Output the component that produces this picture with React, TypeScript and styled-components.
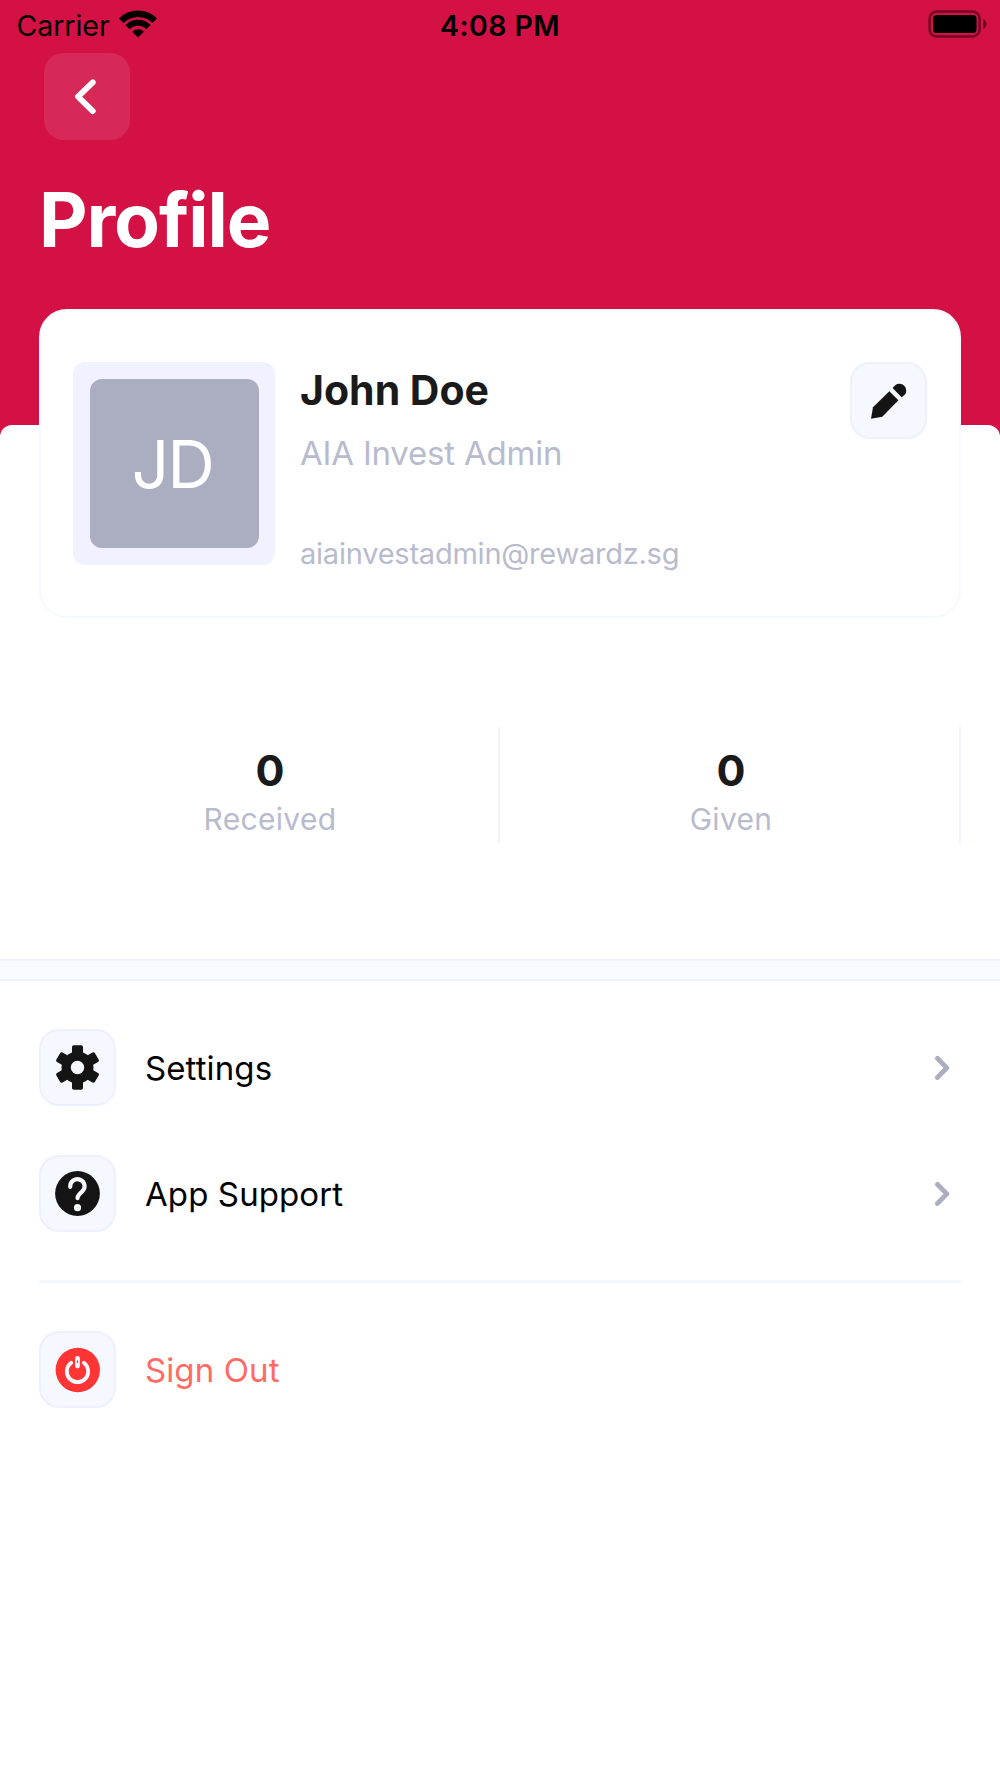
import React from 'react';
import styled, { createGlobalStyle } from 'styled-components';

const color = {
  brand: '#d31145',
  ink: '#1a1a1a',
  muted: '#b8bbcd',
  avatar: '#abadc1',
  line: '#f0f2ff',
  tile: '#f5f8ff',
  tileBorder: '#edf0ff',
  danger: '#ff6b64',
};

const GlobalStyle = createGlobalStyle`
  *, *::before, *::after { box-sizing: border-box; }
  body {
    margin: 0;
    background: #fff;
    font-family: Inter, 'Liberation Sans', sans-serif;
  }
  svg { display: block; }
`;

const Screen = styled.div`
  width: 1000px;
  height: 1778px;
  overflow: hidden;
  background: #fff;
`;

const Header = styled.header`
  height: 440px;
  background: ${color.brand};
`;

const StatusBar = styled.div`
  display: grid;
  grid-template-columns: 1fr auto 1fr;
  align-items: center;
  height: 51px;
  padding: 0 13px;
  font-size: 28.5px;
  color: #000;
`;

const Carrier = styled.div`
  display: flex;
  align-items: center;
  gap: 9.5px;
  padding-left: 3.5px;
  letter-spacing: -0.05px;
`;

const WifiSvg = styled.svg`
  margin-top: -4px;
`;

const Time = styled.div`
  font-weight: 600;
  letter-spacing: 0.4px;
`;

const BatterySvg = styled.svg`
  justify-self: end;
  margin-top: -3px;
`;

const BackButton = styled.button`
  display: block;
  width: 86.5px;
  height: 87px;
  margin: 2px 0 0 43.5px;
  padding: 0;
  border: 0;
  border-radius: 20px;
  background: rgba(255, 255, 255, 0.1);
`;

const Title = styled.h1`
  margin: 35px 0 0 39px;
  font-size: 75px;
  line-height: 90px;
  font-weight: 700;
  letter-spacing: -1.1px;
  color: #fff;
`;

const Sheet = styled.main`
  display: flex;
  flex-direction: column;
  margin-top: -15px;
  border-radius: 12px 12px 0 0;
  background: #fff;
`;

const Card = styled.section`
  display: flex;
  align-items: flex-start;
  height: 309px;
  margin: -116px 39px 0;
  padding: 51px 32px 0;
  border: 2px solid ${color.tile};
  border-radius: 28px;
  background: #fff;
`;

const AvatarFrame = styled.div`
  flex: none;
  width: 202px;
  height: 203px;
  padding: 17px 16.5px;
  border-radius: 12px;
  background: ${color.line};
`;

const Avatar = styled.div`
  display: flex;
  align-items: center;
  justify-content: center;
  height: 169px;
  padding: 1px 3px 0 0;
  border-radius: 12px;
  background: ${color.avatar};
  color: #fff;
  font-size: 65.5px;
  letter-spacing: -1.5px;
`;

const Info = styled.div`
  flex: 1;
  padding: 3px 0 0 25px;
`;

const Name = styled.div`
  font-size: 41px;
  line-height: 50px;
  font-weight: 700;
  color: ${color.ink};
`;

const Role = styled.div`
  margin-top: 18px;
  font-size: 33px;
  line-height: 40px;
  letter-spacing: -0.2px;
  color: ${color.muted};
`;

const Email = styled.div`
  margin-top: 63px;
  font-size: 29px;
  line-height: 36px;
  letter-spacing: -0.23px;
  color: ${color.muted};
`;

const Tile = styled.div`
  flex: none;
  width: 77px;
  height: 77px;
  border: 2px solid ${color.tileBorder};
  border-radius: 20px;
  background: ${color.tile};

  svg { margin: -2px; }
`;

const Stats = styled.section`
  display: grid;
  grid-template-columns: 1fr 1fr;
  margin: 109px 39px 0;
`;

const Stat = styled.div`
  height: 116px;
  padding: 18px 0 0 3px;
  border-right: 2px solid ${color.line};
  text-align: center;
`;

const StatValue = styled.div`
  font-size: 43px;
  line-height: 50px;
  font-weight: 700;
  color: ${color.ink};
`;

const StatLabel = styled.div`
  margin-top: 6px;
  font-size: 30px;
  line-height: 36px;
  letter-spacing: 0.3px;
  color: ${color.muted};
`;

const Band = styled.div`
  height: 22px;
  margin-top: 116px;
  border: solid ${color.line};
  border-width: 2px 0;
  background: #f7faff;
`;

const Menu = styled.nav`
  display: flex;
  flex-direction: column;
  gap: 49px;
  padding: 48px 39px 0;
`;

const MenuItem = styled.a<{ $danger?: boolean }>`
  display: flex;
  align-items: center;
  gap: 29px;
  padding-right: 11px;
  font-size: 33px;
  line-height: 40px;
  letter-spacing: 0.1px;
  color: ${(p) => (p.$danger ? color.danger : '#000')};
`;

const MenuLabel = styled.span`
  flex: 1;
  padding-top: 1px;
`;

const Separator = styled.hr`
  width: 100%;
  height: 3px;
  margin: -1px 0;
  border: 0;
  background: #f3f5ff;
`;

const Wifi = () => (
  <WifiSvg width="38" height="28" viewBox="0 0 38 28" fill="none" stroke="#000">
    <path d="M2.24 10.74A23.7 23.7 0 0 1 35.76 10.74" strokeWidth="6.4" />
    <path d="M8.6 17.1A14.7 14.7 0 0 1 29.4 17.1" strokeWidth="6" />
    <path d="M13.2 21.7A8.2 8.2 0 0 1 24.8 21.7L19 27.5Z" fill="#000" stroke="none" />
  </WifiSvg>
);

const Battery = () => (
  <BatterySvg width="59" height="28" viewBox="0 0 59 28">
    <rect x="1.6" y="1.5" width="50" height="25" rx="7" fill="none" stroke="#000" strokeOpacity="0.45" strokeWidth="2.5" />
    <rect x="5" y="5" width="43.5" height="18" rx="3.5" fill="#000" />
    <path d="M55.2 9a5.5 5.5 0 0 1 0 10Z" fill="#000" fillOpacity="0.5" />
  </BatterySvg>
);

const ChevronLeft = () => (
  <svg width="87" height="87" viewBox="0 0 87 87" fill="none" stroke="#fff" strokeWidth="5.8" strokeLinecap="round" strokeLinejoin="round">
    <path d="M48.8 29.3 34 43.7 48.8 58.1" />
  </svg>
);

const ChevronRight = () => (
  <svg width="16" height="26" viewBox="0 0 16 26" fill="none" stroke={color.avatar} strokeWidth="4.9" strokeLinecap="round" strokeLinejoin="round">
    <path d="M3.5 3.4 12.8 12.9 3.5 22.4" />
  </svg>
);

const Pencil = () => (
  <svg width="77" height="77" viewBox="0 0 77 77" fill="#141414">
    <path d="M21 56.7 23 45.3 39.3 29.2 48.4 38.3 32.3 54.7Z" />
    <path d="M42.6 26 45.2 23.3A6.8 6.8 0 0 1 54.8 32.8L51.6 35.2Z" />
  </svg>
);

const Gear = () => (
  <svg width="77" height="77" viewBox="0 0 77 77" fill="#141414">
    <circle cx="38.5" cy="38.5" r="16" />
    {[0, 60, 120].map((angle) => (
      <rect key={angle} x="33" y="16.2" width="11" height="44.6" rx="1.8" transform={`rotate(${angle} 38.5 38.5)`} />
    ))}
    <circle cx="38.5" cy="38.5" r="6.7" fill={color.tile} />
  </svg>
);

const Help = () => (
  <svg width="77" height="77" viewBox="0 0 77 77" fill="none">
    <circle cx="38.5" cy="38.5" r="22.4" fill="#141414" />
    <path
      d="M31.2 31.8A7.2 7 0 1 1 43 36.6C40.2 39 38.7 40.4 38.5 43.2"
      stroke={color.tile}
      strokeWidth="4.2"
      strokeLinecap="round"
    />
    <circle cx="38.5" cy="52.7" r="3.6" fill={color.tile} />
  </svg>
);

const Power = () => (
  <svg width="77" height="77" viewBox="0 0 77 77" fill="none">
    <circle cx="38.8" cy="39" r="22.2" fill="#ff3535" />
    <path d="M32.2 31.8A10.7 10.7 0 1 0 44.8 31.8" stroke={color.tile} strokeWidth="3.8" strokeLinecap="round" />
    <rect x="36.1" y="25" width="4.8" height="12.4" rx="2.3" fill={color.tile} />
    <ellipse cx="38.5" cy="30.7" rx="0.7" ry="1.4" fill="#ff3535" />
  </svg>
);

export default function App() {
  return (
    <Screen>
      <GlobalStyle />
      <Header>
        <StatusBar>
          <Carrier>
            Carrier
            <Wifi />
          </Carrier>
          <Time>4:08 PM</Time>
          <Battery />
        </StatusBar>
        <BackButton aria-label="Back">
          <ChevronLeft />
        </BackButton>
        <Title>Profile</Title>
      </Header>
      <Sheet>
        <Card>
          <AvatarFrame>
            <Avatar>JD</Avatar>
          </AvatarFrame>
          <Info>
            <Name>John Doe</Name>
            <Role>AIA Invest Admin</Role>
            <Email>aiainvestadmin@rewardz.sg</Email>
          </Info>
          <Tile>
            <Pencil />
          </Tile>
        </Card>
        <Stats>
          <Stat>
            <StatValue>0</StatValue>
            <StatLabel>Received</StatLabel>
          </Stat>
          <Stat>
            <StatValue>0</StatValue>
            <StatLabel>Given</StatLabel>
          </Stat>
        </Stats>
        <Band />
        <Menu>
          <MenuItem>
            <Tile>
              <Gear />
            </Tile>
            <MenuLabel>Settings</MenuLabel>
            <ChevronRight />
          </MenuItem>
          <MenuItem>
            <Tile>
              <Help />
            </Tile>
            <MenuLabel>App Support</MenuLabel>
            <ChevronRight />
          </MenuItem>
          <Separator />
          <MenuItem $danger>
            <Tile>
              <Power />
            </Tile>
            <MenuLabel>Sign Out</MenuLabel>
          </MenuItem>
        </Menu>
      </Sheet>
    </Screen>
  );
}
